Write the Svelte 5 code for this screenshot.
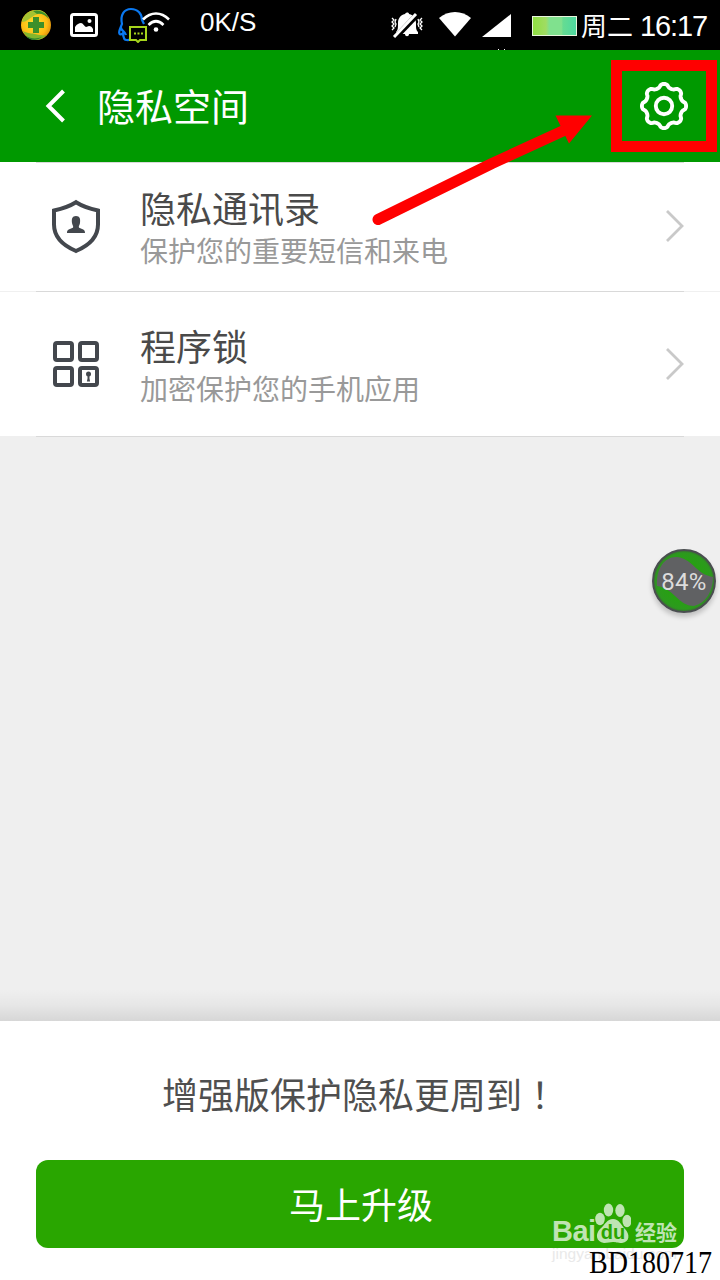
<script>
  const menuItems = [
    { id: 'contacts', title: '隐私通讯录', desc: '保护您的重要短信和来电' },
    { id: 'applock', title: '程序锁', desc: '加密保护您的手机应用' }
  ];

  let battery = $state(84);

  // Eight soft teeth around the centre of a 50x50 box
  function gearPath() {
    let d = '';
    for (let i = 0; i < 160; i++) {
      const a = (i / 160) * Math.PI * 2;
      const c = Math.cos(a * 8);
      const r = 20.3 + 1.8 * Math.sign(c) * Math.pow(Math.abs(c), 0.6);
      const x = 25 + r * Math.cos(a);
      const y = 25 + r * Math.sin(a);
      d += `${i ? 'L' : 'M'}${x.toFixed(2)} ${y.toFixed(2)}`;
    }
    return d + 'Z';
  }
</script>

<div class="screen">
  <div class="status">
    <svg class="s-360" width="32" height="32" viewBox="0 0 32 32">
      <defs>
        <radialGradient id="ball" cx="45%" cy="45%" r="60%">
          <stop offset="0" stop-color="#ffe52e" />
          <stop offset="0.7" stop-color="#fdbb14" />
          <stop offset="1" stop-color="#d98a0a" />
        </radialGradient>
      </defs>
      <circle cx="16" cy="16" r="15" fill="url(#ball)" />
      <path d="M2 13C3 5 10 1 17 1c5 0 8 2 10 5-4-2-8-2-12 0S7 13 2 13Z" fill="#a5c332" />
      <path d="M13 2c7-2 14 2 16 8-4-5-9-6-12-5Z" fill="#3f9129" />
      <path d="M3 22c5 3 9 2 12 3 4 1 8 2 12 1-3 3-7 5-11 5-6 0-11-4-13-9Z" fill="#83b72d" />
      <path d="M6 27c5 3 11 3 16 1-6 4-12 4-16-1Z" fill="#2c8130" />
      <path d="M13 8h6v5h5v6h-5v5h-6v-5H8v-6h5Z" fill="#3c8f2a" />
    </svg>
    <svg class="s-pic" width="28" height="24" viewBox="0 0 28 24">
      <rect x="1.5" y="1.5" width="25" height="21" rx="2" fill="none" stroke="#fff" stroke-width="3" />
      <path d="M5 19v-5c2-3 4-4 6-4s3 3 5 4l3-1c2 0 3 1 4 3v3Z" fill="#fff" />
      <circle cx="19.5" cy="8" r="2" fill="#fff" />
    </svg>
    <svg class="s-qq" width="54" height="36" viewBox="0 0 54 36">
      <path d="M14 32c-3 2-7 1-7-1-1-2-1-3-1-5-3 3-5 1-3-4l2-5C3 8 7 2 14 2s11 5 11 11l2 4M4 20c-1 3 4 4 5 8" fill="none" stroke="#0a78f0" stroke-width="2.200" />
      <path d="M13 20h16v13h-6l-2 2-2-2h-6Z" fill="#000" stroke="#a6d51c" stroke-width="2" />
      <path d="M17 26.500h2M20.500 26.500h2M24 26.500h2" stroke="#a6d51c" stroke-width="2.200" />
      <g fill="none" stroke="#fff" stroke-width="2.600">
        <path d="M26 12.500c8-8 18-8 26 0" />
        <path d="M31.500 18c5-5 10-5 15 0" />
      </g>
      <circle cx="39" cy="22.500" r="2.300" fill="#fff" />
    </svg>
    <span class="speed">0K/S</span>
    <svg class="s-mute" width="32" height="26" viewBox="0 0 32 26">
      <path d="M14 2c1-2 4-2 4 0 5 1 7 5 7 9 0 5 0 7 2 9v2H18c0 3-4 3-4 0H5v-2c2-2 2-4 2-9 0-4 2-8 7-9Z" fill="#fff" />
      <path d="M4 26 26 3" stroke="#000" stroke-width="5.500" />
      <path d="M3 25 25 2" stroke="#fff" stroke-width="3" />
      <path d="m1 6 2 2-2 2 2 2-2 2 2 2-2 2M5 7l-1 3 1 2-1 3M31 6l-2 2 2 2-2 2 2 2-2 2 2 2M27 7l1 3-1 2 1 3" fill="none" stroke="#fff" stroke-width="1.300" />
    </svg>
    <svg class="s-wifi" width="32" height="25" viewBox="0 0 32 25">
      <path d="M0 6c9-8 23-8 32 0L16 24.500Z" fill="#fff" />
    </svg>
    <svg class="s-signal" width="29" height="23" viewBox="0 0 29 23">
      <path d="M0 23 29 0v23Z" fill="#fff" />
    </svg>
    <div class="battery"></div>
    <span class="clock">周二 <b>16:17</b></span>
    <i class="notch"></i>
  </div>

  <header>
    <svg class="back" width="22" height="34" viewBox="0 0 22 34">
      <path d="M18.500 2 3.500 17l15 15" fill="none" stroke="#fff" stroke-width="4" />
    </svg>
    <h1>隐私空间</h1>
    <div class="gear-box">
      <svg width="50" height="50" viewBox="0 0 50 50">
        <g fill="none" stroke="#fff" stroke-width="3.900" stroke-linejoin="round">
          <path d={gearPath()} />
          <circle cx="25" cy="25" r="8.200" />
        </g>
      </svg>
    </div>
  </header>

  <main>
    <ul class="list">
      {#each menuItems as item}
        <li class={item.id}>
          <svg class="icon" width="50" height="56" viewBox="0 0 50 56">
            {#if item.id === 'contacts'}
              <path d="M25 4.200c6 3.800 13 6.300 22 8.300v14c0 12-9 21-22 26.500C12 47.500 3 38.500 3 26.500v-14c9-2 16-4.500 22-8.300Z" fill="none" stroke="#43474d" stroke-width="4" />
              <path d="M25 18c4 0 4.500 3 4 7-.3 2-1.200 2.500-1.200 4 0 2 6.700 1 6.200 6H16c-.5-5 6.200-4 6.200-6 0-1.500-.9-2-1.200-4-.5-4 0-7 4-7Z" fill="#43474d" />
            {:else}
              <g fill="none" stroke="#43474d" stroke-width="4">
                <rect x="4" y="7" width="17" height="17" rx="2" />
                <rect x="29" y="7" width="17" height="17" rx="2" />
                <rect x="4" y="32" width="17" height="17" rx="2" />
                <rect x="29" y="32" width="17" height="17" rx="2" />
              </g>
              <circle cx="37.500" cy="38" r="2.500" fill="#43474d" />
              <path d="M36.500 39h2v3.500l.6 3h-3.200l.6-3Z" fill="#43474d" />
            {/if}
          </svg>
          <div class="text">
            <p class="title">{item.title}</p>
            <p class="desc">{item.desc}</p>
          </div>
          <svg class="chevron" width="20" height="34" viewBox="0 0 20 34">
            <path d="M2 2 17 17 2 32" fill="none" stroke="#c9c9c9" stroke-width="2.800" />
          </svg>
        </li>
      {/each}
    </ul>
  </main>

  <footer>
    <p>增强版保护隐私更周到<span>！</span></p>
    <button>马上升级</button>
  </footer>

  <!-- floating memory ball -->
  <div class="ball">
    <svg width="64" height="64" viewBox="0 0 64 64">
      <defs>
        <radialGradient id="glow">
          <stop offset="0.6" stop-color="#27a013" />
          <stop offset="0.9" stop-color="#2c9a1d" />
          <stop offset="1" stop-color="#3b6d35" />
        </radialGradient>
      </defs>
      <circle cx="32" cy="32" r="31" fill="url(#glow)" stroke="#4a4e50" stroke-width="2" />
      <path d="M5 37C4 20 12 8 24 8c17 1 19 17 37 20 0 14-7 26-19 29C26 57 22 39 5 37Z" fill="#606163" />
    </svg>
    <span>{battery}%</span>
  </div>

  <svg class="arrow" width="222" height="115" viewBox="0 0 222 115">
    <path d="M8 109.500 122 53.500 195 20" fill="none" stroke="#f00" stroke-width="11" stroke-linecap="round" stroke-linejoin="round" />
    <path d="M185.500 5.500H222L199 33.500Z" fill="#f00" />
  </svg>

  <div class="watermark">
    <div class="brand">
      <span class="bai">Bai</span>
      <svg width="36" height="42" viewBox="0 0 36 42">
        <g fill="currentColor">
          <ellipse cx="5" cy="17" rx="4.800" ry="6.200" />
          <ellipse cx="13.500" cy="8" rx="4.700" ry="6.500" />
          <ellipse cx="25" cy="8.500" rx="4.700" ry="6.500" />
          <ellipse cx="32" cy="19" rx="4.500" ry="6.200" />
          <path d="M18 17c6 0 8 6 12 10 5 5 5 13-3 14-5 0-6-1-9-1s-5 1-9 1c-8-1-9-9-4-14 5-4 7-10 13-10Z" />
        </g>
        <text x="18" y="37" text-anchor="middle">du</text>
      </svg>
      <span class="jy">经验</span>
    </div>
    <div class="url">jingyan.baidu.com</div>
  </div>
  <div class="stamp">BD180717</div>
</div>

<style>
  :global(body) {
    background: #efefef;
  }

  .screen {
    position: relative;
    display: flex;
    flex-direction: column;
    width: 720px;
    height: 1280px;
    overflow: hidden;
    background: #efefef;
    font-family: "Noto Sans CJK SC", sans-serif;
  }

  svg {
    display: block;
    flex-shrink: 0;
  }

  h1, p, ul {
    margin: 0;
    padding: 0;
    font-weight: 400;
  }

  .status {
    position: relative;
    display: flex;
    align-items: center;
    height: 50px;
    padding-left: 20px;
    background: #000;
    color: #fff;
    box-sizing: border-box;
  }

  .s-pic { margin-left: 18px; }
  .s-qq { margin-left: 19px; }
  .s-mute { margin-left: 133px; }
  .s-wifi { margin-left: 16px; margin-bottom: 2px; }
  .s-signal { margin-left: 11px; }

  .speed {
    width: 58px;
    margin-left: 29px;
    padding-bottom: 7px;
    font: 26px/40px "Liberation Sans", sans-serif;
  }

  .battery {
    width: 43px;
    height: 18px;
    margin: 2px 0 0 21px;
    border: 1px solid #e8f5dc;
    background: linear-gradient(90deg, #8fdf41, #a0dc63 30%, #80e18e 38%, #80e18e 66%, #65dc92 70%, #4ed8a0);
    flex-shrink: 0;
  }

  .clock {
    display: flex;
    align-items: center;
    margin-left: 4px;
    font-size: 26px;
    line-height: 40px;
    white-space: nowrap;
  }

  .clock b {
    margin: 2px 0 0 7px;
    font: 29px/40px "Liberation Sans", sans-serif;
    letter-spacing: -1.1px;
  }

  .notch {
    position: absolute;
    left: 498px;
    bottom: 0;
    width: 1px;
    height: 1px;
    background: #fff;
    box-shadow: 6px 0 #fff;
  }

  header {
    display: flex;
    align-items: center;
    height: 112px;
    padding-left: 45px;
    background: #090;
    color: #fff;
    box-sizing: border-box;
  }

  h1 {
    margin-left: 30px;
    padding-bottom: 2px;
    font-size: 38px;
    line-height: 60px;
  }

  .gear-box {
    display: flex;
    align-items: center;
    justify-content: center;
    width: 106px;
    height: 92px;
    margin: 0 3px 0 auto;
    border: 11px solid #f00;
    box-sizing: border-box;
  }

  main {
    display: flex;
    flex-direction: column;
    justify-content: space-between;
    flex: 1;
  }

  main::after {
    content: '';
    height: 32px;
    background: linear-gradient(rgba(0, 0, 0, 0), rgba(0, 0, 0, 0.035) 50%, rgba(0, 0, 0, 0.1));
  }

  .list {
    list-style: none;
    background:
      linear-gradient(#d9d9d9, #d9d9d9) 36px 0 / 648px 1px no-repeat,
      linear-gradient(#d9d9d9, #d9d9d9) 36px 129px / 648px 1px no-repeat,
      linear-gradient(#f0f0f0, #f0f0f0) 0 129px / 720px 1px no-repeat,
      linear-gradient(#d9d9d9, #d9d9d9) 36px 274px / 648px 1px no-repeat,
      linear-gradient(#efefef, #efefef) 0 274px / 720px 1px no-repeat,
      #fff;
  }

  li {
    display: flex;
    align-items: center;
    height: 130px;
    padding: 0 35px 0 51px;
    box-sizing: border-box;
  }

  .applock {
    height: 145px;
  }

  .icon,
  .chevron {
    margin-bottom: 2px;
  }

  .text {
    flex: 1;
    margin-left: 39px;
  }

  .title {
    color: #4a4a4a;
    font-size: 36px;
    line-height: 46px;
  }

  .desc {
    color: #999;
    font-size: 28px;
    line-height: 40px;
  }

  footer {
    height: 259px;
    padding: 42px 36px 0;
    background: #fff;
    box-sizing: border-box;
  }

  footer p {
    color: #4f4f4f;
    font-size: 36px;
    line-height: 60px;
    text-align: center;
  }

  /* the centred form of the full-width mark */
  footer span {
    font-family: "Noto Sans CJK TC", sans-serif;
  }

  button {
    display: block;
    width: 100%;
    height: 88px;
    margin-top: 37px;
    padding: 0 0 2px 2px;
    border: 0;
    border-radius: 12px;
    background: #29a600;
    color: #fff;
    font: 36px "Noto Sans CJK SC", sans-serif;
  }

  .ball {
    position: absolute;
    left: 652px;
    top: 549px;
    width: 64px;
    height: 64px;
    border-radius: 50%;
    box-shadow: 0 4px 5px rgba(0, 0, 0, 0.2);
  }

  .ball span {
    position: absolute;
    inset: 0;
    color: #dcdcdc;
    font: 24px/67px Roboto, sans-serif;
    text-align: center;
    letter-spacing: 0.3px;
  }

  .arrow {
    position: absolute;
    left: 370px;
    top: 110px;
  }

  .watermark {
    position: absolute;
    left: 552px;
    top: 1202px;
    width: 130px;
    color: #bfe4b3;
  }

  .brand {
    display: flex;
    align-items: flex-end;
    height: 42px;
  }

  .bai {
    width: 43px;
    font: bold 29px/26px "Liberation Sans", sans-serif;
    letter-spacing: -0.5px;
  }

  .brand text {
    fill: #29a600;
    font: bold 20px "Liberation Sans", sans-serif;
  }

  .jy {
    margin-left: 4px;
    font-size: 21px;
    font-weight: 700;
    line-height: 26px;
  }

  .url {
    color: #e9e9e9;
    font: 15.500px/20px "Liberation Sans", sans-serif;
    white-space: nowrap;
  }

  .stamp {
    position: absolute;
    left: 589px;
    top: 1245px;
    color: #000;
    font: 31px/36px "Liberation Serif", serif;
    transform: scaleX(0.905);
    transform-origin: left;
  }
</style>
